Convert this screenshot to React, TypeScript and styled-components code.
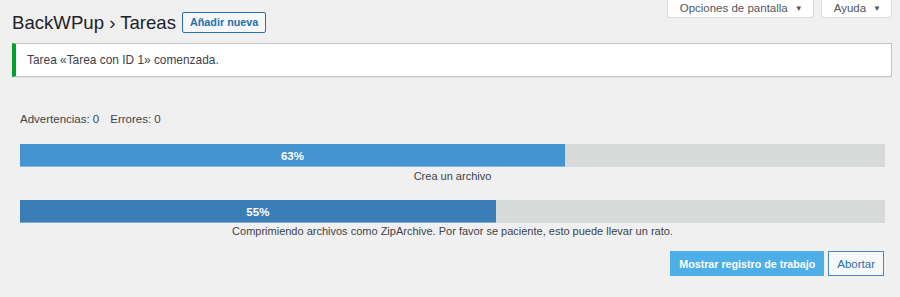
import styled, { createGlobalStyle } from "styled-components";

const GlobalStyle = createGlobalStyle`
  html, body {
    margin: 0;
    padding: 0;
    background: #f0f0f1;
    font-family: "Liberation Sans", Arial, sans-serif;
    color: #3c434a;
  }
`;

interface IStep {
  percent: number;
  label: string;
  color: string;
}

const STEPS: IStep[] = [
  { percent: 63, label: "Crea un archivo", color: "#4494d1" },
  {
    percent: 55,
    label:
      "Comprimiendo archivos como ZipArchive. Por favor se paciente, esto puede llevar un rato.",
    color: "#3a7db7",
  },
];

const Page = styled.div`
  padding: 0 8px 0 12px;
  height: 297px;
  box-sizing: border-box;
`;

const Header = styled.div`
  display: flex;
  justify-content: space-between;
  align-items: flex-start;
  height: 43px;
`;

const TitleRow = styled.div`
  display: flex;
  align-items: center;
  gap: 6px;
  padding-top: 11px;
`;

const Title = styled.h1`
  margin: 0;
  font-size: 18.6px;
  font-weight: 400;
  line-height: 23px;
  color: #1d2327;
`;

const AddButton = styled.a`
  display: inline-block;
  box-sizing: border-box;
  height: 21px;
  padding: 0 7px;
  border: 1px solid #2271b1;
  border-radius: 2px;
  background: #f6f7f7;
  color: #2271b1;
  font-size: 10.8px;
  font-weight: 700;
  line-height: 19px;
  text-decoration: none;
`;

const MetaLinks = styled.div`
  display: flex;
  gap: 7px;
`;

const MetaTab = styled.div`
  box-sizing: border-box;
  height: 18px;
  padding: 0 10px 0 12px;
  background: #fff;
  border: 1px solid #dcdcde;
  border-top: none;
  border-radius: 0 0 4px 4px;
  color: #50575e;
  font-size: 11.5px;
  line-height: 17px;
  white-space: nowrap;

  &:after {
    content: "▼";
    font-size: 8px;
    margin-left: 7px;
    position: relative;
    top: -1px;
  }
`;

const Notice = styled.div`
  box-sizing: border-box;
  height: 34px;
  background: #fff;
  border: 1px solid #c3c4c7;
  border-left: 4px solid #00a32a;
  box-shadow: 0 1px 1px rgba(0, 0, 0, 0.04);
  padding-left: 11px;
  display: flex;
  align-items: center;
  font-size: 11.9px;
  color: #3c434a;
`;

const Content = styled.div`
  padding: 0 7px 0 8px;
`;

const Stats = styled.div`
  margin-top: 34px;
  line-height: 16px;
  font-size: 11.5px;
  color: #3c434a;

  span + span {
    margin-left: 11px;
  }
`;

const Track = styled.div`
  height: 23px;
  background: #d8d9d9;
  margin-top: 17px;
  display: flex;
`;

const Fill = styled.div`
  height: 100%;
  background: ${(p: { color: string }) => p.color};
  box-shadow: inset 0 -1px 0 rgba(255, 255, 255, 0.35);
  color: #fff;
  font-size: 11.5px;
  font-weight: 700;
  display: flex;
  align-items: center;
  justify-content: center;
`;

const StepLabel = styled.div`
  margin-top: ${(p: { gap: number }) => p.gap}px;
  line-height: 14px;
  font-size: 11px;
  text-align: center;
  color: #3c434a;
`;

const Actions = styled.div`
  display: flex;
  justify-content: flex-end;
  gap: 4px;
  margin-top: 13px;
  padding-right: 1px;
`;

const Button = styled.button<{ $primary?: boolean }>`
  box-sizing: border-box;
  height: 25px;
  padding: 0 8px;
  border-radius: 0;
  font-family: inherit;
  cursor: pointer;
  border: 1px solid ${(p) => (p.$primary ? "#4daee8" : "#4d86bb")};
  background: ${(p) => (p.$primary ? "#4daee8" : "#f6f7f7")};
  color: ${(p) => (p.$primary ? "#fff" : "#2b6da8")};
  font-size: ${(p) => (p.$primary ? "10.7px" : "11.5px")};
  font-weight: ${(p) => (p.$primary ? 700 : 400)};
`;

function Step({ step, first }: { step: IStep; first: boolean }) {
  return (
    <>
      <Track>
        <Fill color={step.color} style={{ width: `${step.percent}%` }}>
          {step.percent}%
        </Fill>
      </Track>
      <StepLabel gap={first ? 2 : 1}>{step.label}</StepLabel>
    </>
  );
}

export default function App() {
  return (
    <Page>
      <GlobalStyle />
      <Header>
        <TitleRow>
          <Title>BackWPup › Tareas</Title>
          <AddButton href="#">Añadir nueva</AddButton>
        </TitleRow>
        <MetaLinks>
          <MetaTab>Opciones de pantalla</MetaTab>
          <MetaTab>Ayuda</MetaTab>
        </MetaLinks>
      </Header>
      <Notice>Tarea «Tarea con ID 1» comenzada.</Notice>
      <Content>
        <Stats>
          <span>Advertencias: 0</span>
          <span>Errores: 0</span>
        </Stats>
        {STEPS.map((s, i) => (
          <Step key={i} step={s} first={i === 0} />
        ))}
        <Actions>
          <Button $primary>Mostrar registro de trabajo</Button>
          <Button>Abortar</Button>
        </Actions>
      </Content>
    </Page>
  );
}
